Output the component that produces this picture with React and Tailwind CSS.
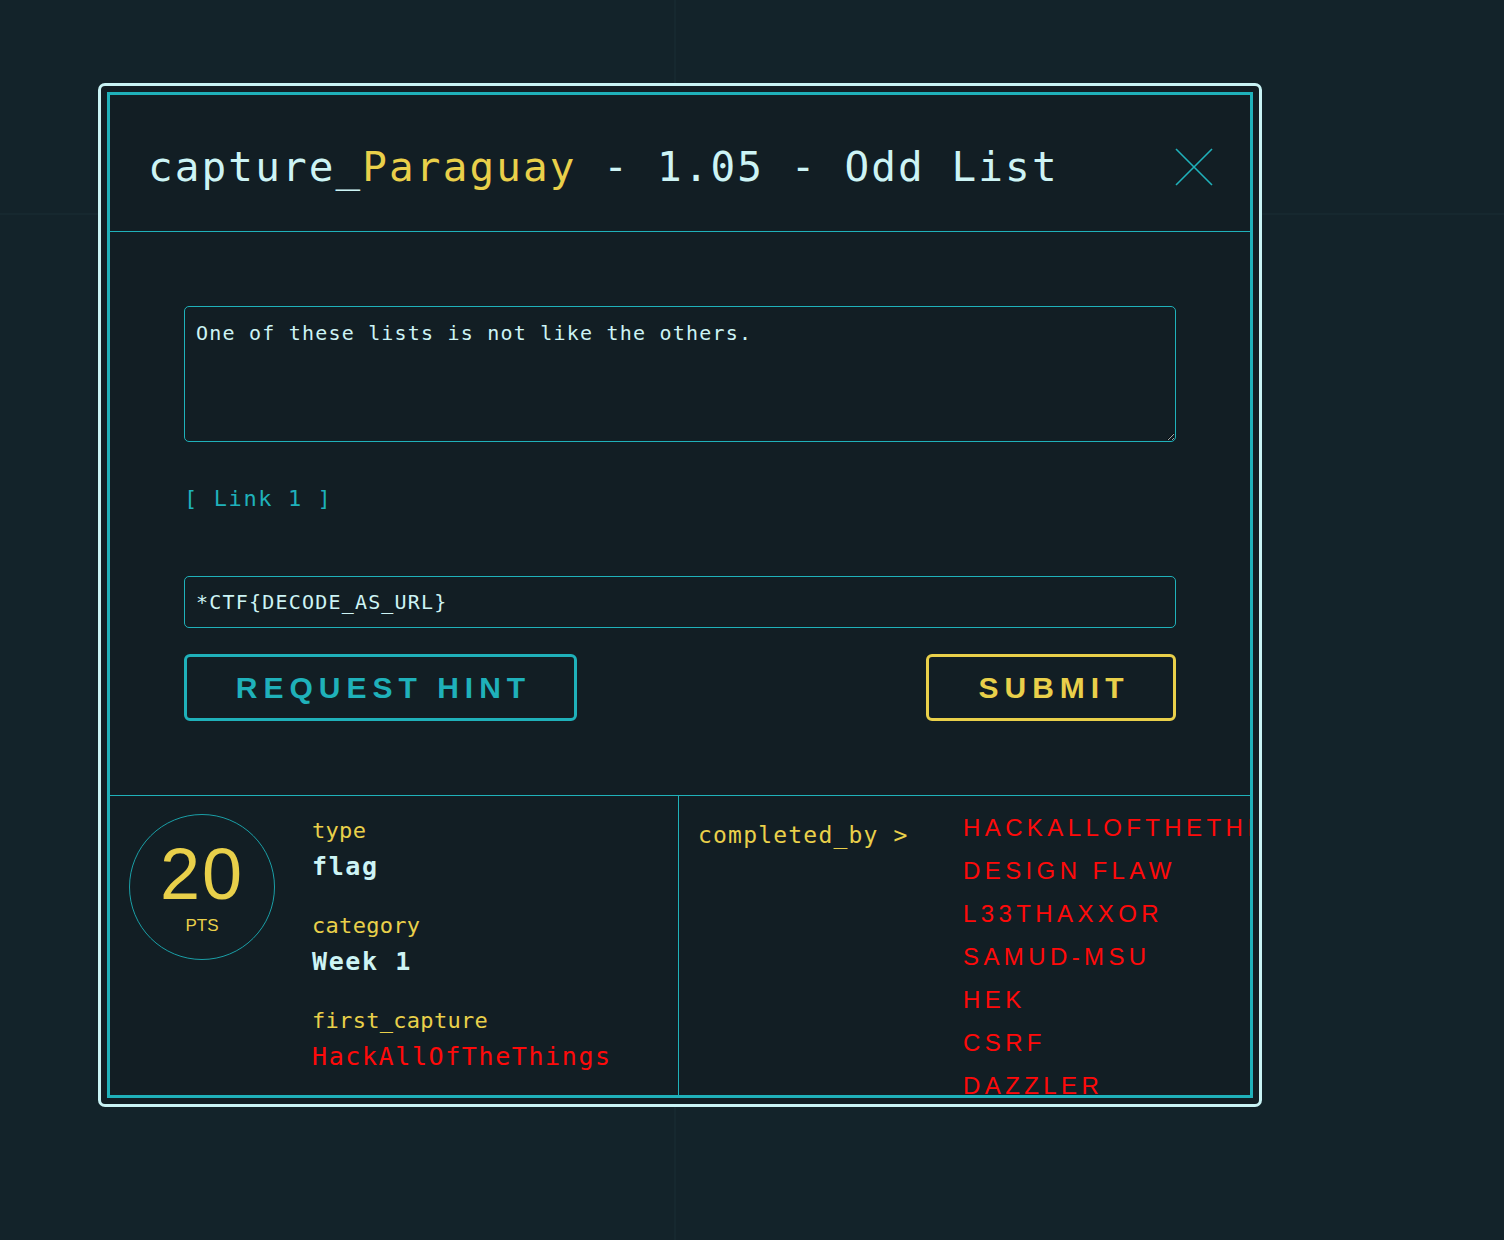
const solvers = ['HACKALLOFTHETHINGS', 'DESIGN FLAW', 'L33THAXXOR', 'SAMUD-MSU', 'HEK', 'CSRF', 'DAZZLER', 'ZEROCOOL']

function Info({ label, value, valueClass, first }) {
  return (
    <div className={first ? '' : 'mt-[32px]'}>
      <div className="text-[22px] leading-[24px] tracking-[0.3px] text-[#e9d04a]">{label}</div>
      <div className={`mt-[9px] text-[25px] leading-[30px] tracking-[1.6px] ${valueClass}`}>{value}</div>
    </div>
  )
}

export default function App() {
  return (
    <div className="min-h-[1240px] w-full bg-[#13232a] bg-[linear-gradient(90deg,transparent_674px,#16282f_674px,#16282f_676px,transparent_676px),linear-gradient(180deg,transparent_213px,#16282f_213px,#16282f_215px,transparent_215px)] pl-[98px] pt-[83px] font-['DejaVu_Sans_Mono',monospace]">
      <div className="h-[1024px] w-[1164px] rounded-[7px] border-[3px] border-[#c9f3f5] bg-[#121e24] p-[6px]">
        <div className="flex h-full flex-col border-[3px] border-[#1fb1ba]">
          {/* Header */}
          <div className="flex h-[137px] shrink-0 items-center justify-between border-b border-[#1fb1ba] pl-[38px] pr-[36px] pt-[7px]">
            <h1 className="text-[41px] leading-[50px] tracking-[2.1px] text-[#cdf4f5]">
              capture_<span className="text-[#e9d04a]">Paraguay</span> - 1.05 - Odd List
            </h1>
            <button className="text-[#1fb1ba]">
              <svg width="40" height="40" viewBox="0 0 40 40" fill="none" stroke="currentColor" strokeWidth="1.6">
                <path d="M2 2 L38 38 M38 2 L2 38" />
              </svg>
            </button>
          </div>

          {/* Body */}
          <div className="shrink-0 px-[74px] py-[74px]">
            <textarea
              readOnly
              defaultValue="One of these lists is not like the others."
              className="block h-[136px] w-full rounded-[5px] border border-[#1fb1ba] bg-transparent px-[11px] pt-[14px] text-[20px] leading-[24px] tracking-[1.2px] text-[#cdf4f5] outline-none [color-scheme:dark]"
            />
            <div className="mt-[42px] h-[30px] text-[22px] leading-[30px] tracking-[1.6px] text-[#1fb1ba]">
              <a href="#">[ Link 1 ]</a>
            </div>
            <input
              readOnly
              value="*CTF{DECODE_AS_URL}"
              className="mt-[62px] block h-[52px] w-full rounded-[5px] border border-[#1fb1ba] bg-transparent px-[11px] py-0 text-[20px] leading-[30px] tracking-[1.2px] text-[#cdf4f5] outline-none"
            />
            <div className="mt-[26px] flex justify-between font-['Liberation_Sans',sans-serif]">
              <button className="h-[67px] w-[393px] rounded-[6px] border-[3px] border-[#1fb1ba] pl-[6px] text-[30px] font-bold tracking-[6px] text-[#1fb1ba]">
                REQUEST HINT
              </button>
              <button className="h-[67px] w-[250px] rounded-[6px] border-[3px] border-[#e9d04a] pl-[6px] text-[30px] font-bold tracking-[6px] text-[#e9d04a]">
                SUBMIT
              </button>
            </div>
          </div>

          {/* Details */}
          <div className="flex min-h-0 flex-1 border-t border-[#1fb1ba]">
            <div className="flex w-[569px] shrink-0 border-r border-[#1fb1ba] pl-[19px] pt-[18px]">
              <div className="flex h-[146px] w-[146px] shrink-0 flex-col items-center rounded-full border border-[#1a9ea6] pt-[31px] font-['Liberation_Sans',sans-serif] text-[#e9d04a]">
                <div className="text-[72px] leading-[56px] tracking-[2px]">20</div>
                <div className="mt-[14px] text-[17px] leading-[20px]">PTS</div>
              </div>
              <div className="ml-[37px] pt-[5px]">
                <Info first label="type" value="flag" valueClass="font-bold text-[#cdf4f5]" />
                <Info label="category" value="Week 1" valueClass="font-bold text-[#cdf4f5]" />
                <Info label="first_capture" value="HackAllOfTheThings" valueClass="text-[#ff0a0a]" />
              </div>
            </div>
            <div className="flex min-w-0 flex-1 overflow-hidden pl-[19px]">
              <div className="w-[265px] shrink-0 pt-[24px] text-[23px] leading-[30px] tracking-[1.2px] text-[#e9d04a]">
                completed_by &gt;
              </div>
              <ul className="pt-[10px] font-['Liberation_Sans',sans-serif] text-[24px] leading-[43px] tracking-[4.4px] whitespace-nowrap text-[#ff0a0a]">
                {solvers.map((s) => (
                  <li key={s}>{s}</li>
                ))}
              </ul>
            </div>
          </div>
        </div>
      </div>
    </div>
  )
}
